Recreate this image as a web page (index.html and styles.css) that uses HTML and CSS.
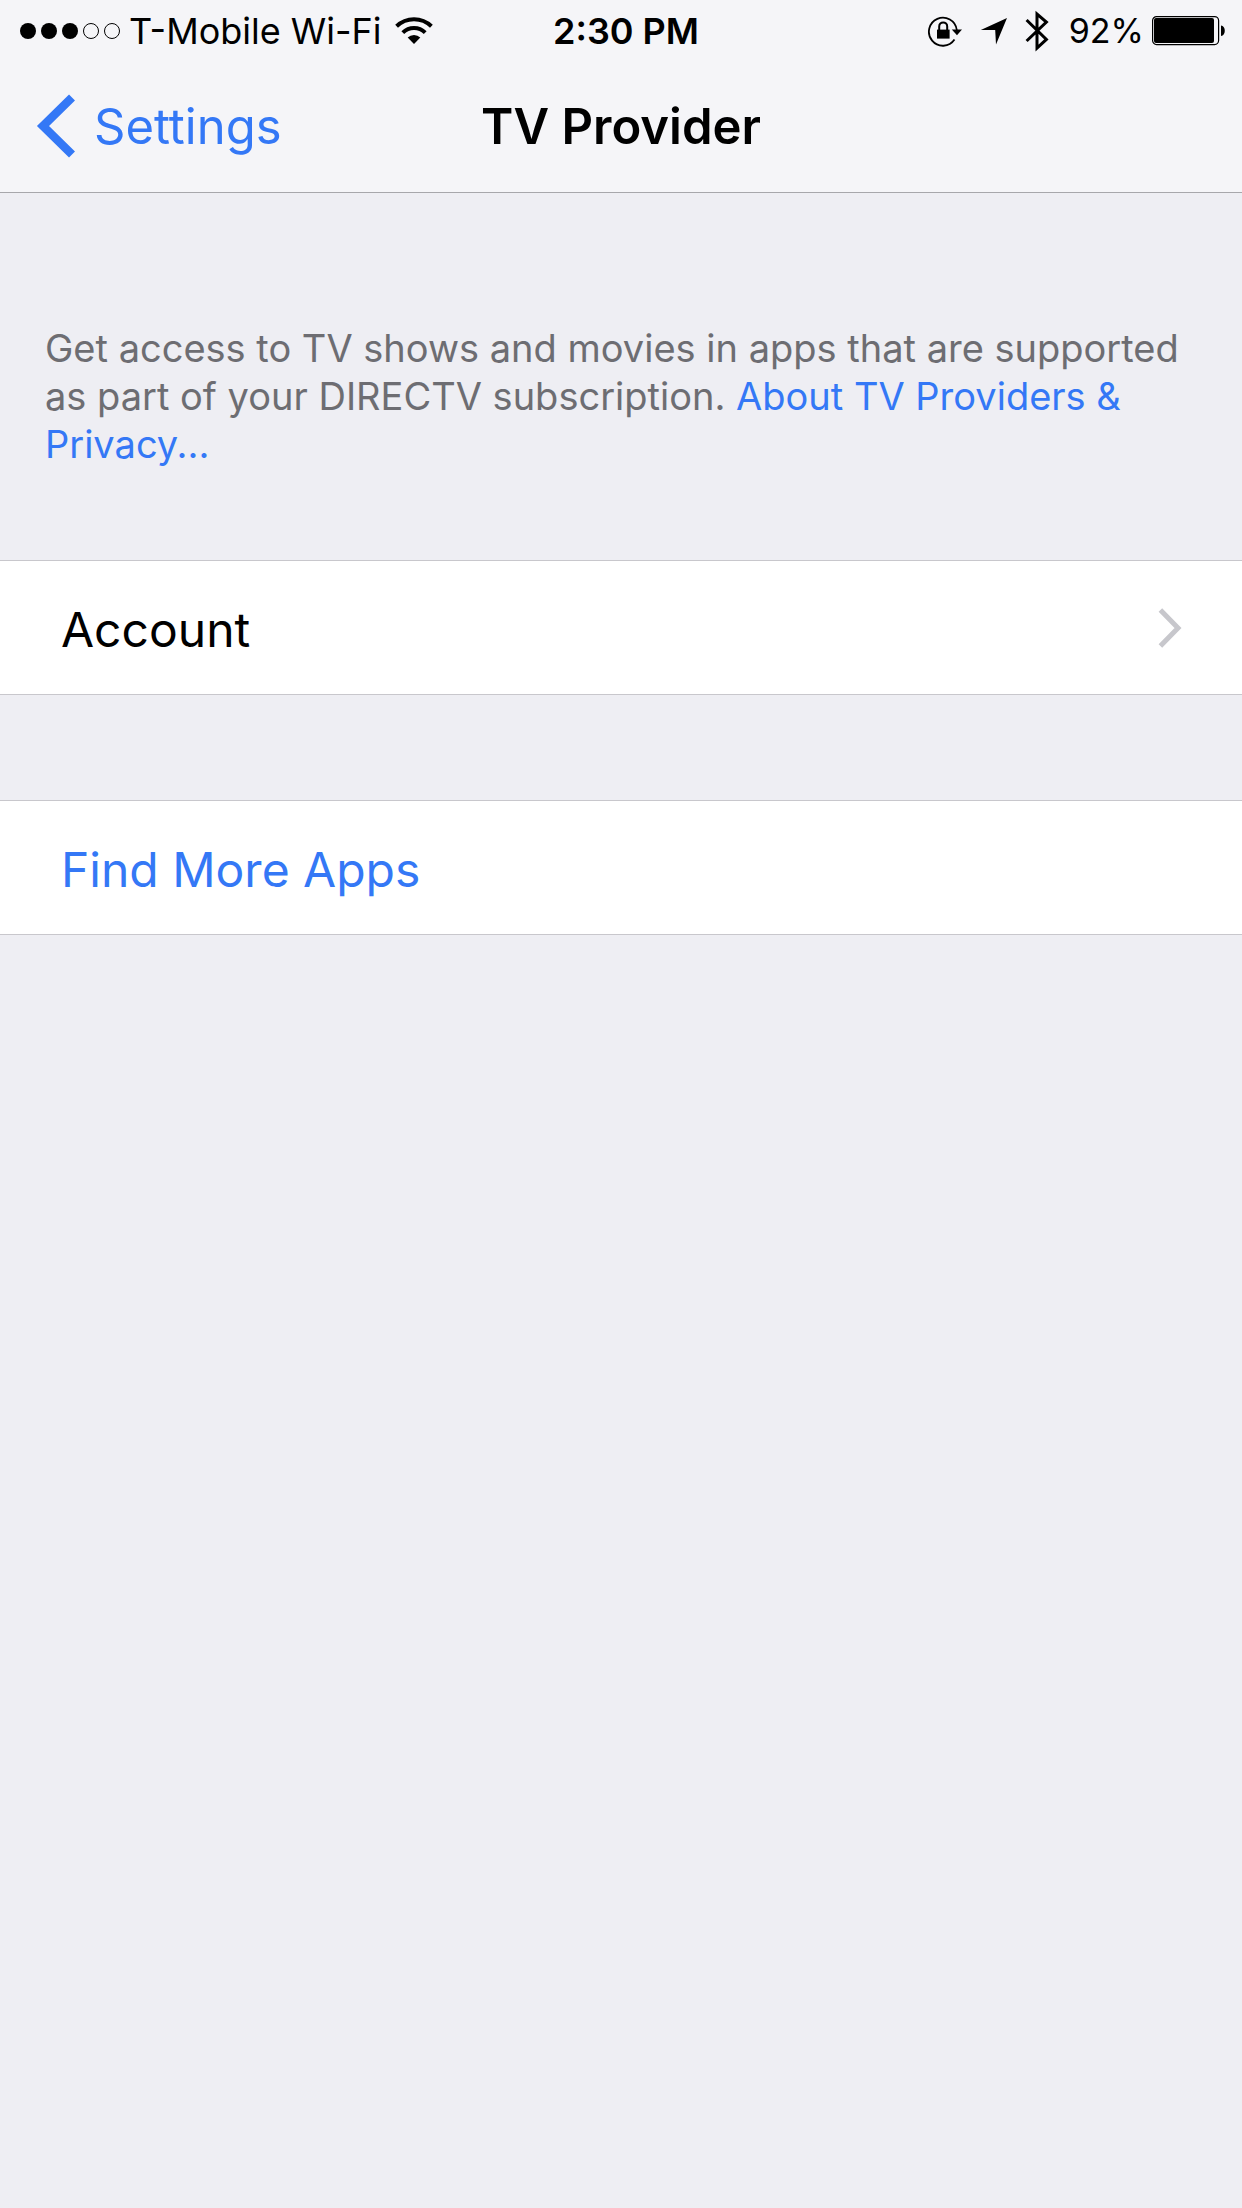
FILE: index.html
```html
<!DOCTYPE html>
<html lang="en">
<head>
<meta charset="utf-8">
<meta name="viewport" content="width=device-width, initial-scale=1">
<title>TV Provider</title>
<link rel="stylesheet" href="styles.css">
</head>
<body>
<header class="header">
  <div class="status">
    <div class="status-left">
      <svg class="signal" width="100" height="16" viewBox="0 0 100 16" aria-hidden="true">
        <circle cx="8" cy="8" r="8"/><circle cx="29" cy="8" r="8"/><circle cx="50" cy="8" r="8"/>
        <g fill="none" stroke="#000"><circle cx="71" cy="8" r="7.5"/><circle cx="92" cy="8" r="7.5"/></g>
      </svg>
      <span class="carrier">T-Mobile Wi-Fi</span>
      <svg class="wifi" width="38" height="28" viewBox="0 0 38 28" aria-hidden="true">
        <g fill="none" stroke="#000" stroke-width="4">
          <path d="M1.6 9.2A25 25 0 0 1 36.4 9.2"/>
          <path d="M7.8 15.6A16 16 0 0 1 30.2 15.6"/>
        </g>
        <path d="M19 27L12.7 20.6A9 9 0 0 1 25.3 20.6Z"/>
      </svg>
    </div>
    <time class="clock">2:30 PM</time>
    <div class="status-right">
      <svg width="36" height="32" viewBox="0 0 36 32" aria-hidden="true">
        <path d="M27.5 24.6A14 14 0 1 1 29.8 15" fill="none" stroke="#000" stroke-width="1.8"/>
        <path d="M24.8 14.6H35L30 20.2Z"/>
        <rect x="10" y="14.6" width="12.6" height="9"/>
        <path d="M12.2 15V11.4a4 4 0 0 1 8 0V15" fill="none" stroke="#000" stroke-width="2"/>
      </svg>
      <svg class="locate" width="28" height="28" viewBox="0 0 28 28" aria-hidden="true">
        <path d="M27 1L16 27.4L15.2 13H.8Z"/>
      </svg>
      <svg class="bluetooth" width="24" height="42" viewBox="0 0 24 42" aria-hidden="true">
        <path d="M1.6 10L21.4 29.4L12 38V4L21.4 12L1.6 31" fill="none" stroke="#000" stroke-width="3"/>
      </svg>
      <span class="percent">92%</span>
      <svg class="battery" width="74" height="30" viewBox="0 0 74 30" aria-hidden="true">
        <rect x=".6" y=".6" width="66" height="28" rx="4" fill="none" stroke="#000" stroke-width="1.2"/>
        <rect x="2" y="2" width="60" height="25" rx="2"/>
        <path d="M69 9.5c5 0 5 10.5 0 10.5Z"/>
      </svg>
    </div>
  </div>
  <nav class="nav">
    <a class="back" href="#settings">
      <svg width="40" height="64" viewBox="0 0 40 64" aria-hidden="true">
        <path d="M36 3.5L7 32L36 60.5" fill="none" stroke="#3478f6" stroke-width="8.5"/>
      </svg>
      <span>Settings</span>
    </a>
    <h1 class="title">TV Provider</h1>
  </nav>
</header>
<main>
  <p class="note">Get access to TV shows and movies in apps that are supported as part of your DIRECTV subscription. <a href="#privacy">About TV Providers &amp; Privacy...</a></p>
  <div class="groups">
    <a class="row" href="#account">
      <span class="row-label">Account</span>
      <svg width="24" height="40" viewBox="0 0 24 40" aria-hidden="true">
        <path d="M2.4 2L20 20L2.4 38" fill="none" stroke="#c7c7cc" stroke-width="5"/>
      </svg>
    </a>
    <button class="row action" type="button"><span class="row-label">Find More Apps</span></button>
  </div>
</main>
</body>
</html>
```
FILE: styles.css
```css
* { box-sizing: border-box; }

body {
  margin: 0;
  background: #eeeef3;
  color: #000;
  font-family: Inter, "Liberation Sans", sans-serif;
  font-size: 48px;
}

a { color: #3478f6; text-decoration: none; }

svg { display: block; flex: none; }

.header {
  background: #f5f5f8;
  border-bottom: 1px solid #a7a7ab;
}

.status {
  display: grid;
  grid-template-columns: 1fr auto 1fr;
  height: 62px;
  padding: 0 16px 0 20px;
  font-size: 36px;
  line-height: 62px;
}

.status-left, .status-right { display: flex; align-items: center; }
.status-right { justify-content: flex-end; }
.carrier { margin: 0 13px 0 9px; }
.clock { padding-left: 6px; font-weight: 600; }
.locate { margin-left: 17px; }
.bluetooth { margin-left: 17px; }
.percent { margin: 0 8px 0 20px; font-size: 34px; }

.nav {
  display: grid;
  grid-template-columns: 1fr auto 1fr;
  align-items: center;
  height: 130px;
  padding-bottom: 2px;
  font-size: 49px;
}

.back { display: flex; align-items: center; gap: 18px; padding-left: 36px; }

.title { margin: 0; font-size: 49px; font-weight: 600; }

.note {
  margin: 0;
  padding: 131px 40px 92px 45px;
  color: #6d6d72;
  font-size: 38px;
  line-height: 48px;
}

.groups { display: flex; flex-direction: column; gap: 105px; }

.row {
  display: flex;
  align-items: center;
  justify-content: space-between;
  width: 100%;
  min-height: 135px;
  padding: 0 60px 0 61px;
  border: solid #c8c7cc;
  border-width: 1px 0;
  background: #fff;
  color: #000;
  font: inherit;
  text-align: left;
}

.row-label { padding-top: 4px; }

.action { color: #3478f6; }
```
